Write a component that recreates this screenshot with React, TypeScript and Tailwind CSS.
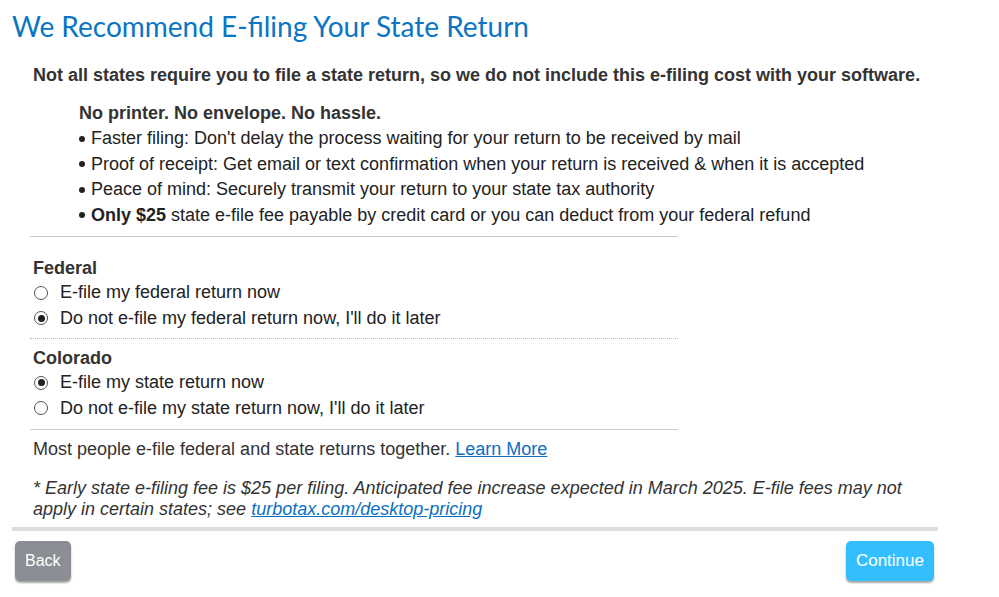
import React from "react";

function Radio({ checked }: { checked?: boolean }) {
  return (
    <span className="flex h-[14px] w-[14px] shrink-0 items-center justify-center rounded-full border border-[#555] bg-white">
      {checked && <span className="h-[7px] w-[7px] rounded-full bg-[#222]" />}
    </span>
  );
}

function Option({ label, checked }: { label: string; checked?: boolean }) {
  return (
    <label className="flex h-[25.5px] items-center gap-[12px] pl-[1px]">
      <Radio checked={checked} />
      <span>{label}</span>
    </label>
  );
}

const bullets = [
  <>Faster filing: Don't delay the process waiting for your return to be received by mail</>,
  <>Proof of receipt: Get email or text confirmation when your return is received &amp; when it is accepted</>,
  <>Peace of mind: Securely transmit your return to your state tax authority</>,
  <>
    <b>Only $25</b> state e-file fee payable by credit card or you can deduct from your federal refund
  </>,
];

export default function App() {
  return (
    <div className="min-h-[597px] w-[999px] bg-white font-['Liberation_Sans',Arial,sans-serif] text-[18px] text-[#222]">
      <h1 className="pl-[12px] pt-[8px] font-['Lato',sans-serif] text-[28px] leading-[36px] text-[#0a75c2]">
        We Recommend E-filing Your State Return
      </h1>

      <div className="pl-[30px]">
        <p className="mt-[19px] pl-[3px] font-bold leading-[24px] text-[#333]">
          Not all states require you to file a state return, so we do not include this e-filing cost with your software.
        </p>

        <div className="mt-[14px] pl-[49px]">
          <p className="font-bold leading-[25px] text-[#333]">No printer. No envelope. No hassle.</p>
          <ul>
            {bullets.map((b, i) => (
              <li key={i} className="flex h-[25.5px] items-center">
                <span className="mr-[6px] h-[6px] w-[6px] shrink-0 rounded-full bg-[#222]" />
                <span>{b}</span>
              </li>
            ))}
          </ul>
        </div>

        <div className="mt-[8px] w-[648px] border-t border-[#ccc]" />

        <div className="w-[648px] pl-[3px]">
          <p className="mt-[19px] font-bold leading-[24px] text-[#333]">Federal</p>
          <Option label="E-file my federal return now" />
          <Option label="Do not e-file my federal return now, I'll do it later" checked />
        </div>

        <div className="mt-[7px] w-[648px] border-t border-dotted border-[#bbb]" />

        <div className="pl-[3px]">
          <p className="mt-[7px] font-bold leading-[24px] text-[#333]">Colorado</p>
          <Option label="E-file my state return now" checked />
          <Option label="Do not e-file my state return now, I'll do it later" />
        </div>

        <div className="mt-[8px] w-[648px] border-t border-[#ccc]" />

        <p className="mt-[7px] pl-[3px] leading-[24px] text-[#333]">
          Most people e-file federal and state returns together.{" "}
          <a href="#" className="text-[#0a6fc2] underline">
            Learn More
          </a>
        </p>

        <p className="mt-[17px] w-[900px] pl-[3px] italic leading-[21px] text-[#333]">
          * Early state e-filing fee is $25 per filing. Anticipated fee increase expected in March 2025. E-file fees may not apply in certain states; see{" "}
          <a href="#" className="text-[#0a6fc2] underline">
            turbotax.com/desktop-pricing
          </a>
        </p>
      </div>

      <div className="ml-[12px] mt-[7px] h-[4px] w-[926px] bg-[#dedede]" />

      <div className="flex w-[938px] items-center justify-between pl-[15px] pr-[4px] pt-[10px]">
        <button className="h-[40px] rounded-[5px] bg-[#8b8e95] px-[10px] text-[16px] text-white shadow-[0_2px_2px_rgba(0,0,0,0.35)]">
          Back
        </button>
        <button className="h-[40px] rounded-[5px] bg-[#33bfff] px-[10px] text-[17px] text-white shadow-[0_2px_2px_rgba(0,0,0,0.35)]">
          Continue
        </button>
      </div>
    </div>
  );
}
